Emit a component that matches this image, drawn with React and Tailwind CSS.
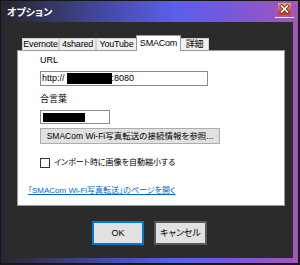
const FONT = "font-['Liberation_Sans','Noto_Sans_CJK_JP',sans-serif] [font-feature-settings:'palt']";

const CloseButton = () => (
  <div className="flex flex-col items-center mt-[2px]">
    <svg width="13" height="12" viewBox="0 0 13 12">
      <defs>
        <linearGradient id="cb" x1="0" y1="0" x2="0" y2="1">
          <stop offset="0" stopColor="#f2a28a" />
          <stop offset="0.5" stopColor="#e06446" />
          <stop offset="1" stopColor="#c4371f" />
        </linearGradient>
      </defs>
      <rect x="0" y="0" width="13" height="12" fill="url(#cb)" />
      <path d="M3.5 3 L9.5 9 M9.5 3 L3.5 9" stroke="#5a2a20" strokeWidth="3.2" strokeLinecap="square" />
      <path d="M3.5 3 L9.5 9 M9.5 3 L3.5 9" stroke="#ffffff" strokeWidth="1.7" strokeLinecap="square" />
    </svg>
    <div className="w-[19px] h-[1px] bg-white mt-[2px]" />
  </div>
);

const TABS = [
  { label: "Evernote", w: "w-[37px]" },
  { label: "4shared", w: "w-[37px]" },
  { label: "YouTube", w: "w-[41px]" },
  { label: "SMACom", w: "w-[45px]", active: true },
  { label: "詳細", w: "w-[29px]" },
];

const Tab = ({ label, w, active }) =>
  active ? (
    <div
      className={`${w} h-[16px] -mb-[1px] -mx-[1px] relative z-10 bg-white border border-b-0 border-[#9a9a9a] flex items-center justify-center text-black whitespace-nowrap`}
    >
      {label}
    </div>
  ) : (
    <div
      className={`${w} h-[12px] bg-[#f0f0f0] border border-b-0 border-[#d0d0d0] flex items-center justify-center text-black whitespace-nowrap`}
    >
      {label}
    </div>
  );

export default function App() {
  return (
    <div className={`w-[300px] h-[265px] bg-[#1b1b1b] ${FONT}`}>
      <div className="w-[299px] h-[264px] border border-[#161616] bg-[linear-gradient(to_right,#26262c_0%,#30324f_12%,#4549a4_35%,#5b5fe9_58%,#7059df_74%,#8d57cc_88%,#a058b8_100%)] flex flex-col">
        {/* Title bar */}
        <div className="h-[21px] flex items-start justify-between pl-[6px] pr-[4px]">
          <span className="text-white text-[10px] font-bold leading-[21px] mt-[1px]">オプション</span>
          <CloseButton />
        </div>

        {/* Client area */}
        <div className="flex-1 ml-[5px] mr-[5px] mb-[5px] bg-[#2b2b2b] flex flex-col pl-[11px] pt-[13px] text-[9px] leading-[13px]">
          <div className="flex items-end pl-[5px] h-[15px] tracking-[-0.2px]">
            {TABS.map((t) => (
              <Tab key={t.label} {...t} />
            ))}
          </div>

          <div className="w-[268px] h-[156px] bg-white border border-[#9a9a9a] pl-[10px] pt-[3px] flex flex-col text-black whitespace-nowrap">
            <div className="ml-[12px] h-[13px]">URL</div>
            <div className="ml-[12px] mt-[4px] w-[168px] h-[15px] border border-[#8a8a8a] flex items-center pl-[1px]">
              <span>http://</span>
              <span className="ml-[2px] w-[45px] h-[11px] bg-black" />
              <span>:8080</span>
            </div>

            <div className="ml-[12px] mt-[7px] h-[13px]">合言葉</div>
            <div className="ml-[12px] mt-[4px] w-[70px] h-[14px] border border-[#8a8a8a] flex items-center pl-[2px]">
              <span className="w-[42px] h-[9px] bg-black" />
            </div>

            <div className="ml-[12px] mt-[4px] w-[180px] h-[16px] bg-[#e1e1e1] border border-[#adadad] flex items-center justify-center text-[8.5px]">
              SMACom Wi-Fi写真転送の接続情報を参照...
            </div>

            <div className="ml-[12px] mt-[12px] h-[13px] flex items-center gap-[4px] text-[8px]">
              <span className="w-[10px] h-[10px] border border-[#333333] bg-white" />
              <span>インポート時に画像を自動縮小する</span>
            </div>

            <div className="mt-[15px] h-[13px] text-[#0066cc] underline text-[8px]">
              「SMACom Wi-Fi写真転送」のページを開く
            </div>
          </div>

          <div className="flex justify-center gap-[10px] mt-[15px] pr-[11px] whitespace-nowrap">
            <div className="w-[52px] h-[24px] bg-[#e1e1e1] border-2 border-[#0078d7] flex items-center justify-center text-black">
              OK
            </div>
            <div className="w-[53px] h-[24px] bg-[#e1e1e1] border-2 border-[#5a5a5a] flex items-center justify-center text-black">
              キャンセル
            </div>
          </div>
        </div>
      </div>
    </div>
  );
}
